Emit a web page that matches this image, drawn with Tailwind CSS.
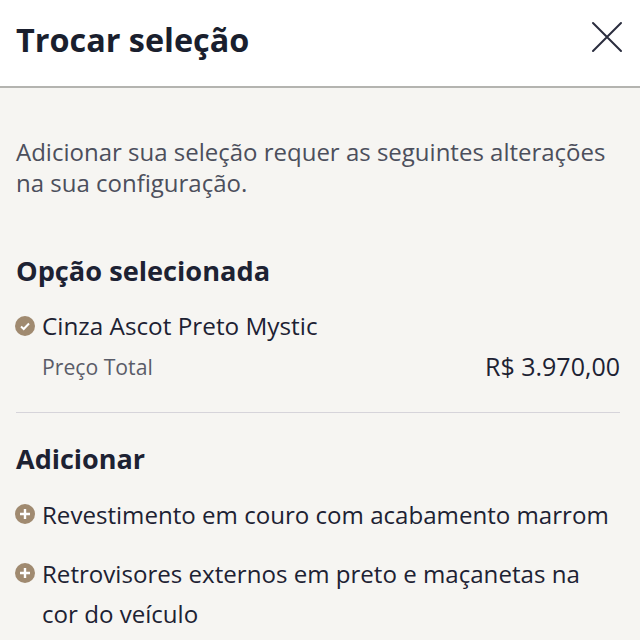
<!doctype html>
<html lang="pt-BR">
  <head>
    <meta charset="UTF-8" />
    <title>Trocar seleção</title>
    <script src="https://cdn.jsdelivr.net/npm/@tailwindcss/browser@4"></script>
  </head>
  <body class="w-[640px] h-[640px] overflow-hidden bg-[#f6f5f2] font-['Open_Sans',sans-serif] text-[#1d2233]">
    <!-- Cabeçalho -->
    <header class="h-[88px] bg-white border-b-2 border-[#b4b4b0] flex items-center justify-between pl-4 pr-[17px]">
      <h1 class="font-bold text-[32.4px] leading-none text-[#1a1f2e] mb-[8px]">Trocar seleção</h1>
      <svg class="w-[32px] h-[32px] mb-[12px]" viewBox="0 0 32 32" fill="none" stroke="#2a2d3e" stroke-width="2" stroke-linecap="round">
        <path d="M2 2 L30 30 M30 2 L2 30" />
      </svg>
    </header>

    <main class="pl-4 pr-5 pt-[48px]">
      <p class="text-[24px] leading-[31px] text-[#4c4f5c] -mr-1">Adicionar sua seleção requer as seguintes alterações na sua configuração.</p>

      <!-- Opção selecionada -->
      <section class="mt-[56px] border-b border-[#d6d4da] pb-[29px]">
        <h2 class="font-bold text-[27.2px] leading-[34px]">Opção selecionada</h2>
        <div class="flex items-center gap-[7px] mt-[22px] h-[32px]">
          <svg class="w-[20px] h-[20px] shrink-0 -ml-px" viewBox="0 0 20 20">
            <circle cx="10" cy="10" r="10" fill="#a08a70" />
            <path d="M6 10.5 L8.7 13 L14 7.5" fill="none" stroke="#fff" stroke-width="2" />
          </svg>
          <span class="text-[24.3px] leading-[32px]">Cinza Ascot Preto Mystic</span>
        </div>
        <div class="flex items-center justify-between pl-[26px] mt-[9px] h-[32px]">
          <span class="text-[21.2px] text-[#5a5c68]">Preço Total</span>
          <span class="text-[25px]">R$ 3.970,00</span>
        </div>
      </section>

      <!-- Adicionar -->
      <section class="mt-[29px]">
        <h2 class="font-bold text-[27px] leading-[34px]">Adicionar</h2>
        <ul class="mt-[19px] flex flex-col gap-[19px] text-[24.1px] leading-[40px]">
          <li class="flex gap-[7px]">
            <svg class="w-[20px] h-[20px] shrink-0 mt-[9px] -ml-px" viewBox="0 0 20 20">
              <circle cx="10" cy="10" r="10" fill="#a08a70" />
              <path d="M10 5 V15 M5 10 H15" stroke="#fff" stroke-width="2.4" />
            </svg>
            <span class="whitespace-nowrap">Revestimento em couro com acabamento marrom</span>
          </li>
          <li class="flex gap-[7px] pr-[24px]">
            <svg class="w-[20px] h-[20px] shrink-0 mt-[9px] -ml-px" viewBox="0 0 20 20">
              <circle cx="10" cy="10" r="10" fill="#a08a70" />
              <path d="M10 5 V15 M5 10 H15" stroke="#fff" stroke-width="2.4" />
            </svg>
            <span>Retrovisores externos em preto e maçanetas na cor do veículo</span>
          </li>
        </ul>
      </section>
    </main>
  </body>
</html>
